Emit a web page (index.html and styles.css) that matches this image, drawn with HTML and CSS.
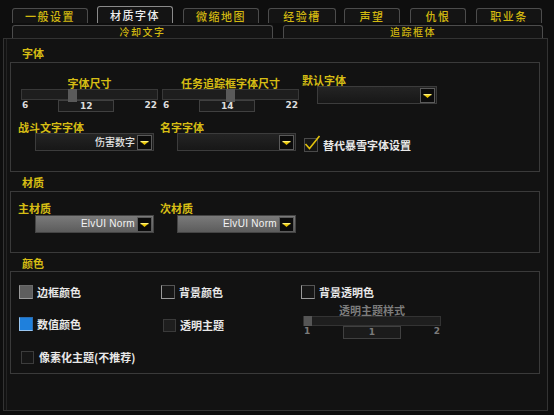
FILE: index.html
```html
<!DOCTYPE html>
<html>
<head>
<meta charset="utf-8">
<link rel="stylesheet" href="styles.css">
</head>
<body>
<div class="tabs1">
  <div class="tab t1">一般设置</div>
  <div class="tab t2 active">材质字体</div>
  <div class="tab t3">微缩地图</div>
  <div class="tab t4">经验槽</div>
  <div class="tab t5">声望</div>
  <div class="tab t6">仇恨</div>
  <div class="tab t7">职业条</div>
</div>
<div class="tabs2">
  <div class="tab2 s1">冷却文字</div>
  <div class="tab2 s2">追踪框体</div>
</div>
<div class="panel">
  <div class="sec-label">字体</div>
  <div class="group g-font">
    <div class="row r1">
      <div class="slider sl1">
        <div class="sl-label">字体尺寸</div>
        <div class="sl-bar"><div class="sl-thumb" style="left:46px"></div></div>
        <div class="sl-nums"><span class="num">6</span><span class="sl-val num">12</span><span class="num">22</span></div>
      </div>
      <div class="slider sl2">
        <div class="sl-label">任务追踪框字体尺寸</div>
        <div class="sl-bar"><div class="sl-thumb" style="left:63px"></div></div>
        <div class="sl-nums"><span class="num">6</span><span class="sl-val num">14</span><span class="num">22</span></div>
      </div>
      <div class="field f-default">
        <div class="f-label">默认字体</div>
        <div class="dd dd-def"><span class="dd-text"></span><span class="dd-btn"><svg width="13" height="13" viewBox="0 0 13 13"><path d="M2.5 5.5 H10.5 L6.5 9 Z" fill="#e8c400"/><rect x="2.5" y="5" width="8" height="1.2" fill="#fff27a"/></svg></span></div>
      </div>
    </div>
    <div class="row r2">
      <div class="field">
        <div class="f-label">战斗文字字体</div>
        <div class="dd"><span class="dd-text">伤害数字</span><span class="dd-btn"><svg width="13" height="13" viewBox="0 0 13 13"><path d="M2.5 5.5 H10.5 L6.5 9 Z" fill="#e8c400"/><rect x="2.5" y="5" width="8" height="1.2" fill="#fff27a"/></svg></span></div>
      </div>
      <div class="field">
        <div class="f-label">名字字体</div>
        <div class="dd"><span class="dd-text"></span><span class="dd-btn"><svg width="13" height="13" viewBox="0 0 13 13"><path d="M2.5 5.5 H10.5 L6.5 9 Z" fill="#e8c400"/><rect x="2.5" y="5" width="8" height="1.2" fill="#fff27a"/></svg></span></div>
      </div>
      <div class="cb cb-blizz">
        <span class="box box-check"><svg class="check" width="20" height="18" viewBox="0 0 20 18"><path d="M2.5 10 L6.5 14.5 L16.5 2" fill="none" stroke="#e2c20c" stroke-width="1.6"/></svg></span>
        <span class="cb-text">替代暴雪字体设置</span>
      </div>
    </div>
  </div>

  <div class="sec-label">材质</div>
  <div class="group g-tex">
    <div class="row">
      <div class="field">
        <div class="f-label">主材质</div>
        <div class="dd dd-tex"><span class="dd-text">ElvUI Norm</span><span class="dd-btn"><svg width="13" height="13" viewBox="0 0 13 13"><path d="M2.5 5.5 H10.5 L6.5 9 Z" fill="#e8c400"/><rect x="2.5" y="5" width="8" height="1.2" fill="#fff27a"/></svg></span></div>
      </div>
      <div class="field">
        <div class="f-label">次材质</div>
        <div class="dd dd-tex"><span class="dd-text">ElvUI Norm</span><span class="dd-btn"><svg width="13" height="13" viewBox="0 0 13 13"><path d="M2.5 5.5 H10.5 L6.5 9 Z" fill="#e8c400"/><rect x="2.5" y="5" width="8" height="1.2" fill="#fff27a"/></svg></span></div>
      </div>
    </div>
  </div>

  <div class="sec-label sec-color">颜色</div>
  <div class="group g-color">
    <div class="cb"><span class="box box-grey"></span><span class="cb-text">边框颜色</span></div>
    <div class="cb"><span class="box box-empty"></span><span class="cb-text">背景颜色</span></div>
    <div class="cb"><span class="box box-empty"></span><span class="cb-text">背景透明色</span></div>
    <div class="cb cb-r2"><span class="box box-blue"></span><span class="cb-text">数值颜色</span></div>
    <div class="cb cb-r2b"><span class="box box-dis"></span><span class="cb-text">透明主题</span></div>
    <div class="slider sl3">
      <div class="sl-label">透明主题样式</div>
      <div class="sl-bar"><div class="sl-thumb" style="left:0px"></div></div>
      <div class="sl-nums"><span class="num">1</span><span class="sl-val num">1</span><span class="num">2</span></div>
    </div>
    <div class="cb cb-r3"><span class="box box-dark"></span><span class="cb-text">像素化主题(不推荐)</span></div>
  </div>
</div>
</body>
</html>
```

FILE: styles.css
```css
* { box-sizing: border-box; }
html, body { margin: 0; padding: 0; }
body {
  width: 554px;
  height: 415px;
  overflow: hidden;
  background: #0e0e0e;
  font-family: "Noto Sans CJK SC", "Noto Sans", sans-serif;
  font-size: 11px;
  color: #e4e4e4;
}

/* top tabs */
.tabs1 {
  display: flex;
  align-items: flex-end;
  height: 23px;
  padding-left: 12px;
}
.tab {
  height: 15px;
  border: 1px solid #4c4c4c;
  border-bottom: none;
  border-radius: 3px 3px 0 0;
  background: #141414;
  color: #d2b810;
  font-size: 11px;
  font-weight: 500;
  line-height: 14px;
  text-align: center;
  letter-spacing: 1.5px;
}
.tab.active {
  height: 17px;
  border-color: #8a8a8a;
  color: #eeeeee;
  line-height: 16px;
}
.t1 { width: 76px; }
.t2 { width: 76px; margin-left: 9px; }
.t3 { width: 76px; margin-left: 10px; }
.t4 { width: 68px; margin-left: 9px; }
.t5 { width: 56px; margin-left: 8px; }
.t6 { width: 56px; margin-left: 10px; }
.t7 { width: 66px; margin-left: 10px; }

.tabs2 {
  display: flex;
  gap: 10px;
  margin-top: 2px;
  padding-left: 12px;
}
.tab2 {
  height: 13px;
  border: 1px solid #4c4c4c;
  border-bottom: none;
  border-radius: 3px 3px 0 0;
  background: #141414;
  color: #d2b810;
  font-size: 10px;
  font-weight: 500;
  line-height: 12px;
  text-align: center;
  letter-spacing: 1.5px;
}
.s1 { width: 261px; }
.s2 { width: 260px; }

/* main panel */
.panel {
  margin-left: 3px;
  width: 545px;
  height: 373px;
  border: 1px solid #333333;
  box-shadow: inset 2px 0 0 #121212, inset 3px 0 0 #242424;
  background: #121212;
  padding: 7px 7px 0 6px;
}
.sec-label {
  padding-left: 12px;
  height: 14px;
  line-height: 14px;
  color: #d6bd14;
  font-weight: 700;
  font-size: 11px;
  margin-bottom: 2px;
}
.group {
  width: 530px;
  border: 1px solid #3a3a3a;
  margin-bottom: 3px;
}
.sec-color { margin-bottom: 1px; }

.row { display: flex; align-items: flex-start; }

.g-font { padding: 14px 0 19px 10px; }
.g-font .r2 { margin-top: 9px; margin-left: -3px; }
.g-tex { padding: 10px 0 19px 7px; }

/* slider */
.slider { width: 137px; }
.sl2 { margin-left: 4px; }
.sl-label {
  text-align: center;
  color: #d6bd14;
  font-weight: 700;
  line-height: 12px;
  height: 12px;
}
.sl-bar {
  position: relative;
  height: 11px;
  border: 1px solid #383838;
  background: #1e1e1e;
}
.sl-thumb {
  position: absolute;
  top: -1px;
  width: 9px;
  height: 13px;
  background: #5a5a5a;
}
.sl-nums {
  display: flex;
  justify-content: space-between;
  align-items: flex-start;
  padding: 0 1px;
}
.num {
  font-family: "DejaVu Sans", sans-serif;
  font-weight: 700;
  font-size: 9px;
  line-height: 11px;
  color: #dcdcdc;
}
.sl-val {
  width: 56px;
  height: 12px;
  border: 1px solid #404040;
  background: #1b1b1b;
  text-align: center;
  line-height: 10px;
}

/* fields / dropdowns */
.field { width: 142px; }
.f-label {
  color: #d6bd14;
  font-weight: 700;
  line-height: 12px;
  height: 12px;
}
.f-default { margin-left: 3px; margin-top: -3px; width: auto; }
.dd {
  margin-left: 17px;
  width: 119px;
  height: 18px;
  border: 1px solid #3c3c3c;
  background: linear-gradient(#242424, #171717);
  display: flex;
  align-items: center;
  justify-content: flex-end;
  padding-right: 1px;
}
.dd-def { margin-left: 15px; width: 120px; }
.dd-text {
  color: #e4e4e4;
  font-size: 10px;
  font-weight: 500;
  line-height: 14px;
  margin-right: 2px;
}
.dd-tex {
  background: linear-gradient(#7a7a7a, #5c5c5c);
  border-color: #444;
  margin-top: 1px;
}
.dd-tex .dd-text {
  font-family: "Liberation Sans", sans-serif;
  color: #f4f4f4;
  font-size: 10px;
  font-weight: 400;
  letter-spacing: 0.3px;
}
.dd-btn {
  width: 15px;
  height: 15px;
  border: 1px solid #5a5a5a;
  background: #0b0b0b;
  display: flex;
  align-items: center;
  justify-content: center;
}

/* checkbox */
.cb {
  display: flex;
  align-items: center;
  height: 14px;
}
.box {
  position: relative;
  width: 14px;
  height: 14px;
  flex: none;
  margin-right: 4px;
}
.cb-text {
  color: #e8e8e8;
  font-weight: 700;
  font-size: 11px;
  line-height: 14px;
  white-space: nowrap;
}
.cb-blizz { margin-left: 2px; margin-top: 17px; }
.cb-blizz .box { margin-right: 5px; }
.box-check { border: 1px solid #4a4a4a; background: #161616; }
.check { position: absolute; left: -2px; top: -5px; }
.box-grey {
  background: #5e5e5e;
  border: 1px solid #9a9a9a;
  border-top-color: #6a6a6a;
  border-right-color: #6a6a6a;
}
.box-empty {
  background: #161616;
  border: 1px solid #9a9a9a;
  border-top-color: #555;
  border-right-color: #555;
}
.box-blue {
  background: #1f80dc;
  border: 1px solid #9ac6f0;
  border-top-color: #2a6cb0;
  border-right-color: #2a6cb0;
}
.box-dis {
  width: 13px;
  height: 13px;
  background: #1e1e1e;
  border: 1px solid #3a3a3a;
  margin-left: 2px;
}
.box-dark {
  width: 13px;
  height: 13px;
  background: #161616;
  border: 1px solid #3c3c3c;
  margin-right: 5px;
}

.g-color {
  display: grid;
  grid-template-columns: 142px 140px 1fr;
  row-gap: 5px;
  align-items: start;
  padding: 13px 0 9px 8px;
}
.cb-r2 { margin-top: 13px; }
.cb-r2b { margin-top: 14px; }
.cb-r3 { margin-top: 6px; margin-left: 2px; grid-column: 1 / 3; }
.cb-r3 .box { margin-right: 5px; }

.sl3 { margin-left: 2px; width: 138px; }
.sl3 .sl-label { color: #7c7c7c; }
.sl3 .sl-bar { height: 10px; border-color: #333; }
.sl3 .sl-thumb { width: 8px; height: 10px; top: -1px; left: 0; background: #555; }
.sl3 .num { color: #7a7a7a; }
.sl3 .sl-val { width: 58px; height: 13px; line-height: 11px; }
```
